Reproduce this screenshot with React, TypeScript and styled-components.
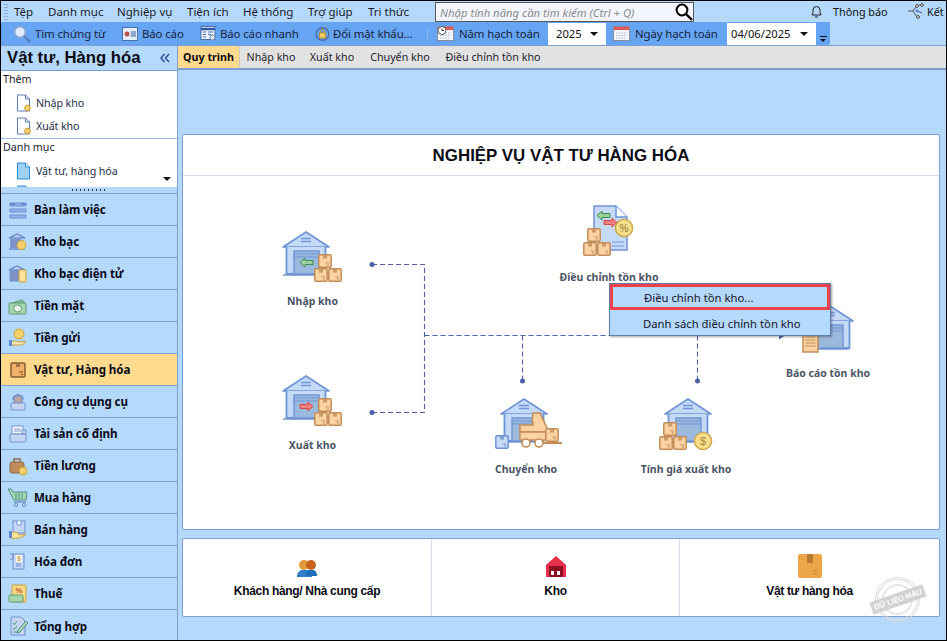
import React from "react";
import styled, { createGlobalStyle } from "styled-components";

const Global = createGlobalStyle`
  html, body { margin: 0; padding: 0; background: #000; }
  * { box-sizing: border-box; }
`;
const BLUE = "#b5d9fb";
const FONT = `"Noto Sans", "Open Sans", sans-serif`;

const Root = styled.div`
  width: 947px; height: 641px; border: 1px solid #000; background: ${BLUE};
  display: flex; flex-direction: column; overflow: hidden;
  font-family: ${FONT}; font-size: 12px; color: #111;
`;
const MenuBar = styled.div`height: 21px; flex: none; display: flex; align-items: center; position: relative; padding-left: 13px;`;
const MenuItem = styled.span<{ $w: number }>`width: ${p => p.$w}px; font-size: 11.5px; color: #1a1a2a; white-space: nowrap;`;
const Grip = styled.span`position: absolute; left: 3px; top: 3px; bottom: 2px; width: 4px;
  background: repeating-linear-gradient(#8fb0d6 0 1px, transparent 1px 3px);`;
const SearchBox = styled.div`width: 259px; height: 20px; margin: 1px 0 0 5px; border: 1px solid #555; background: #f3f6fe;
  display: flex; align-items: center; justify-content: space-between; padding: 0 0 0 4px;
  font-style: italic; color: #8a8a8a; font-size: 11.3px; position: relative; z-index: 2;`;
const RightGroup = styled.div`display: flex; align-items: center; margin-left: auto; font-size: 10.8px;`;
const RightItem = styled.span<{ $w: number }>`display: flex; align-items: center; width: ${p => p.$w}px; gap: 5px; white-space: nowrap;`;

const ToolRow = styled.div`height: 24px; flex: none; display: flex; border-bottom: 1px solid #7da0d0;`;
const Toolbar = styled.div`width: 829px; height: 23px; background: #66a4f4; display: flex; align-items: center; position: relative; padding-left: 12px; border-radius: 0 0 2px 0; color: #16243c; font-size: 11.4px; letter-spacing: -0.1px;`;
const Tool = styled.span<{ $w: number }>`display: flex; align-items: center; gap: 3px; width: ${p => p.$w}px; white-space: nowrap;`;
const Sep = styled.span`width: 1px; height: 13px; background: #8bb4ea; margin: 0 9px 0 0;`;
const Select = styled.div<{ $w: number }>`width: ${p => p.$w}px; height: 22px; background: #fff; display: flex; align-items: center; justify-content: space-between; padding: 0 8px 0 ${p => p.$w > 70 ? 4 : 8}px; color: #111; letter-spacing: 0; font-size: 11.2px;`;
const Caret = styled.i`display: block; width: 0; height: 0; border: 4.5px solid transparent; border-top: 4.5px solid #111; border-bottom: 0;`;
const Overflow = styled.div`position: absolute; right: 3px; bottom: 3px; width: 7px; height: 6px; border-top: 1px solid #111;
  &::after { content: ""; display: block; width: 0; height: 0; margin-top: 2px; border: 3.5px solid transparent; border-top: 3px solid #111; border-bottom: 0; }`;

const Body = styled.div`flex: 1; display: flex; min-height: 0;`;
const Side = styled.aside`width: 177px; flex: none; border-right: 1px solid #7da0d0; display: flex; flex-direction: column;`;
const SideHead = styled.div`height: 25px; flex: none; display: flex; align-items: center; justify-content: space-between; padding: 0 7px 0 6px;
  font-weight: 700; font-size: 16.7px; font-family: "Liberation Sans", sans-serif; color: #0b0b14; border-bottom: 1px solid #7da0d0;`;
const Section = styled.div<{ $h: number; $last?: boolean }>`height: ${p => p.$h}px; flex: none; background: #fff; border-bottom: ${p => p.$last ? "0" : "1px solid #9dbbe4"}; overflow: hidden; padding-left: 2px; position: relative;`;
const SectionTitle = styled.div`height: 20px; line-height: 17px; font-size: 10.7px; color: #1c1c2c;`;
const SectionRow = styled.div`height: 23px; display: flex; align-items: center; gap: 4px; padding-left: 13px; font-size: 10.7px; letter-spacing: -0.1px; color: #26304a;`;
const DownMark = styled.i`position: absolute; right: 6px; bottom: 6px; width: 0; height: 0; border: 4px solid transparent; border-top: 4px solid #111; border-bottom: 0;`;
const SideGrip = styled.div`height: 7px; flex: none; display: flex; justify-content: center; align-items: center; border-bottom: 1px solid #7da0d0; padding-bottom:1px; background: ${BLUE};
  &::after { content: ""; width: 34px; height: 2px; background: repeating-linear-gradient(90deg, #333 0 1px, transparent 1px 4px); }`;
const NavRow = styled.div<{ $active?: boolean }>`height: 32px; flex: none; display: flex; align-items: center; gap: 6px; padding-left: 7px; border-bottom: 1px solid #7da0d0;
  background: ${p => p.$active ? "#fdda8e" : "transparent"}; font-weight: 700; font-size: 11.6px; color: #0a0a18; letter-spacing: -0.1px;
  &:last-child { border-bottom: 0; }`;

const Main = styled.main`flex: 1; min-width: 0; display: flex; flex-direction: column;`;
const Tabs = styled.div`height: 24px; background: #e2e2e2; border-bottom: 2px solid #7da0d0; display: flex; flex: none;`;
const Tab = styled.div<{ $active?: boolean; $w: number }>`width: ${p => p.$w}px; height: 22px; display: flex; align-items: center; justify-content: center; font-size: 10.7px; color: #1c1c2c;
  ${p => p.$active ? `background: #fdda8e; font-weight: 700; color: #0b0b14; border-right: 1px solid #c9c9c9;` : ""}`;
const Content = styled.div`flex: 1; display: flex; flex-direction: column; padding: 64px 6px 23px 4px; gap: 8px; min-height: 0;`;
const Card = styled.section`height: 396px; background: #fff; border: 1px solid #7da0d0; border-radius: 2px; display: flex; flex-direction: column; flex: none;`;
const CardTitle = styled.h1`margin: 0; height: 41px; border-bottom: 1px solid #d3dde9; flex: none; display: flex; align-items: center; justify-content: center;
  font-family: "Liberation Sans", sans-serif; font-size: 16.9px; font-weight: 700; color: #0b0b14; padding-top: 1px;`;
const Canvas = styled.div`position: relative; flex: 1;`;
const Wires = styled.svg`position: absolute; left: 0; top: 0;`;
const Node = styled.div<{ $x: number; $y: number }>`position: absolute; left: ${p => p.$x}px; top: ${p => p.$y}px; width: 150px; margin-left: -75px;
  display: flex; flex-direction: column; align-items: center;`;
const NodeLabel = styled.div<{ $top: number; $dx?: number }>`margin-top: ${p => p.$top}px; margin-left: ${p => p.$dx ?? 0}px; font-weight: 700; font-size: 10.5px; color: #4b5568; white-space: nowrap;`;
const Popup = styled.div`position: absolute; left: 426px; top: 107px; width: 222px; height: 53px; background: ${BLUE}; border: 1px solid #5e7fa8; box-shadow: 1px 1px 2px rgba(60,60,60,.45); z-index: 3;`;
const PopItem = styled.div<{ $hot?: boolean }>`height: 26px; display: flex; align-items: center; padding-left: ${p => p.$hot ? 31 : 33}px; font-size: 11.3px; color: #16162a;
  ${p => p.$hot ? `border: 3px solid #ef4050; ` : ""}`;

const Bottom = styled.section`height: 79px; background: #fff; border: 1px solid #7da0d0; border-radius: 2px; display: grid; grid-template-columns: 248px 248px 1fr; position: relative; flex: none;`;
const Shortcut = styled.div`display: flex; flex-direction: column; align-items: center; justify-content: flex-end; padding-bottom: 18px; gap: 6px;
  font-family: "Liberation Sans", sans-serif; font-weight: 700; font-size: 12px; color: #0a0a14; letter-spacing: -0.32px;
  & + & { border-left: 1px solid #d3dde9; }`;
const Stamp = styled.div`position: absolute; right: 19px; top: 38px; width: 45px; height: 45px; border-radius: 50%; border: 3px double #d9d9d9; outline: 2px solid #e6e6e6; outline-offset: -9px; display: flex; align-items: center; justify-content: center;`;
const StampLabel = styled.span`background: #d2d2d2; color: #fff; font-family: "Liberation Sans", sans-serif; font-weight: 700; font-size: 7.5px; white-space: nowrap; padding: 2px 3px; transform: rotate(-19deg);`;

const S = "#6f94d6"; const F = "#c5daf7"; const BS = "#c48d58"; const BF = "#fbd3a2";

function Box({ x, y, s = 14, blue }: { x: number; y: number; s?: number; blue?: boolean }) {
  const st = blue ? "#6f94d6" : BS, fi = blue ? "#c5daf7" : BF;
  return <g transform={`translate(${x} ${y}) scale(${s / 14})`}>
    <rect x=".8" y=".8" width="12.4" height="12.4" rx="1.2" fill={fi} stroke={st} strokeWidth="1.5" />
    <rect x="5" y="1" width="4" height="3.6" fill={st} opacity=".8" />
    <path d="M7.5 9h3.5M9 11h2" stroke={st} strokeWidth="1" />
  </g>;
}
function House({ door = "#9ab9dc" }: { door?: string }) {
  return <g>
    <path d="M1 17 L24 2 L47 17 Z" fill={F} stroke={S} strokeWidth="1.6" strokeLinejoin="round" />
    <path d="M19 8.500h10M19 11.500h10" stroke={S} strokeWidth="1.4" />
    <path d="M4.500 17v27h39V17" fill={F} stroke={S} strokeWidth="1.8" />
    <rect x="12" y="21" width="25" height="23" fill={door} stroke={S} strokeWidth="1.4" />
    <path d="M12 24h25M12 27h25" stroke={S} strokeWidth="1" />
    <path d="M1 45h42" stroke={S} strokeWidth="1.6" />
  </g>;
}
function Stack({ x, y }: { x: number; y: number }) {
  return <g><Box x={x + 4} y={y} /><Box x={x} y={y + 14} /><Box x={x + 14} y={y + 14} /></g>;
}
function Arrow({ x, y, color, dir }: { x: number; y: number; color: string; dir: "l" | "r" }) {
  const d = dir === "l" ? "M0 4.500 L5 0v2.500h8v4H5V9Z" : "M13 4.500 L8 0v2.500H0v4h8V9Z";
  return <path transform={`translate(${x} ${y})`} d={d} fill={color === "g" ? "#9ed09f" : "#ef8080"} stroke={color === "g" ? "#3b8a4e" : "#d44"} strokeWidth="1" />;
}
const Ico = styled.svg`display: block; flex: none;`;

const WhImport = () => <Ico width="62" height="54" viewBox="0 0 62 54"><House /><Arrow x={18} y={28} color="g" dir="l" /><Stack x={32} y={24} /></Ico>;
const WhExport = () => <Ico width="62" height="54" viewBox="0 0 62 54"><House /><Arrow x={18} y={28} color="r" dir="r" /><Stack x={32} y={24} /></Ico>;
const WhMove = () => <Ico width="68" height="54" viewBox="0 0 68 54"><g transform="translate(5 0)"><House /></g>
  <Box x={0} y={38} s={14} blue />
  <path d="M27 28h11v-3h-1l1-9h7l7 15v4H25v-7z" fill={BF} stroke={BS} strokeWidth="1.6" />
  <path d="M25 35h26v8H25z" fill={BF} stroke={BS} strokeWidth="1.4" />
  <circle cx="31" cy="46" r="4" fill="#fff" stroke={BS} strokeWidth="1.6" /><circle cx="44" cy="46" r="4" fill="#fff" stroke={BS} strokeWidth="1.6" />
  <Box x={50} y={31} /><path d="M48 46h19" stroke={BS} strokeWidth="2" />
</Ico>;
const WhPrice = () => <Ico width="56" height="54" viewBox="0 0 56 54"><g transform="translate(5 0)"><House /></g>
  <Stack x={0} y={25} />
  <circle cx="44" cy="44" r="8.600" fill="#f8dd8a" stroke="#c9a84c" strokeWidth="1.4" />
  <text x="44" y="48" fontSize="11" fill="#a58432" textAnchor="middle" fontFamily="Liberation Sans">$</text>
</Ico>;
const DocAdjust = () => <Ico width="52" height="54" viewBox="0 0 52 54">
  <path d="M11 1h22l11 11v33H11z" fill={F} stroke={S} strokeWidth="1.5" /><path d="M33 1v11h11" fill="#fff" stroke={S} strokeWidth="1.5" />
  <Arrow x={14} y={6} color="g" dir="l" /><Arrow x={21} y={13} color="r" dir="r" />
  <path d="M29 37h12M29 41h12" stroke={S} strokeWidth="1" />
  <circle cx="41" cy="23" r="8.600" fill="#f8dd8a" stroke="#c9a84c" strokeWidth="1.4" />
  <text x="41" y="27" fontSize="10" fill="#8f7a3a" textAnchor="middle" fontFamily="Liberation Sans">%</text>
  <Stack x={0} y={23} />
</Ico>;
const WhReport = () => <Ico width="52" height="54" viewBox="0 0 52 54"><g transform="translate(4 2)"><House /></g>
  <path d="M1 26h11l4 4v20H1z" fill={BF} stroke={BS} strokeWidth="1.5" /><path d="M3.500 35h10M3.500 38h10M3.500 41h10M3.500 44h10" stroke={BS} strokeWidth="1" />
</Ico>;

const Page = ({ color }: { color?: string }) => <Ico width="16" height="18" viewBox="0 0 16 18">
  <path d="M1.500 1h8l4 4v12h-12z" fill={color || "#fff"} stroke={color ? "#2f8fd8" : "#5c7bb8"} strokeWidth="1" />
  {!color && <path d="M9.500 1v4h4" fill="none" stroke="#5c7bb8" />}
  {!color && <circle cx="11.500" cy="14" r="2.800" fill="#f6d36b" stroke="#c79a2c" />}
  {color && <path d="M9.500 1v4h4" fill="#dbeafe" stroke="#2f8fd8" />}
</Ico>;

const N = (p: { children: React.ReactNode }) => <Ico width="20" height="20" viewBox="0 0 20 20">{p.children}</Ico>;
const bl = "#6f8fcf", lb = "#c5d6f4", ye = "#f6d06a", ys = "#c9a23a", og = "#eeb06a";
const navIcons: React.ReactNode[] = [
  <N><path d="M2 3h16v3H2zM2 9h16v3H2zM2 15h16v3H2z" fill="#8fb4ee" stroke={bl} /><path d="M2 4h5M13 4h5" stroke="#3d66b7"/></N>,
  <N><path d="M1 6l8-4 8 4zM3 7v9M7 7v9M11 7v9M1 17h16" fill={lb} stroke={bl} strokeWidth="1.5" /><rect x="3" y="7" width="10" height="9" fill="#7f92c8" /><circle cx="13.500" cy="13" r="4.500" fill={ye} stroke={ys} /></N>,
  <N><path d="M1 6l8-4 8 4z" fill={lb} stroke={bl} strokeWidth="1.5" /><rect x="2" y="7" width="11" height="10" fill="#7f92c8" stroke={bl} /><rect x="11" y="6" width="7" height="12" rx="1" fill="#fbe39a" stroke={ys} /></N>,
  <N><path d="M1 8l13-4 3 3z" fill="#8cc79a" stroke="#5d9c6e"/><rect x="1" y="7" width="17" height="11" rx="1" fill="#a5d6ae" stroke="#5d9c6e" /><ellipse cx="9.500" cy="12.500" rx="4" ry="3.500" fill="#e8f6ea" stroke="#5d9c6e" /></N>,
  <N><circle cx="11" cy="6" r="5" fill={ye} stroke={ys} /><path d="M3 14c4-2 6 0 9 0l6-1c-1 2-3 4-7 4H3z" fill="#fbe6b5" stroke={ys} /><rect x="1" y="12" width="3" height="6" fill="#5b87d6" /></N>,
  <N><rect x="3" y="3" width="14" height="14" rx="1.500" fill={og} stroke="#8a5a30" strokeWidth="1.5" /><path d="M8 3h4v4H8z" fill="#a5703f" /><path d="M11 12h4M13 14.500h2" stroke="#7a4a20" /></N>,
  <N><path d="M5 8V5l5-3 5 3v3" fill="#8d9bc9" stroke={bl} /><rect x="6" y="4" width="8" height="9" fill="#b9a3a3" stroke={bl} /><rect x="3" y="11" width="14" height="7" rx="1" fill={lb} stroke={bl} /></N>,
  <N><rect x="4" y="2" width="11" height="8" fill="#fff" stroke={bl} /><path d="M6 5h7M6 7h7" stroke={bl}/><rect x="2" y="10" width="16" height="8" rx="1" fill={lb} stroke={bl} /><path d="M14 6h4v4h-4z" fill={lb} stroke={bl} /></N>,
  <N><rect x="2" y="6" width="14" height="11" rx="2" fill="#c08a5c" stroke="#8a6848" /><path d="M6 6V3h6v3" fill="none" stroke="#8a6848" strokeWidth="1.4" /><circle cx="15" cy="15" r="4" fill={ye} stroke={ys} /></N>,
  <N><path d="M0 1h3l2 3h14l-1 8H6z" fill="#a5d6ae" stroke="#4d8f88" /><path d="M8 5v6M11 5v6M14 5v6" stroke="#4d8f88" /><path d="M6 14h12" stroke={bl} strokeWidth="1.4" /><circle cx="8" cy="17" r="1.600" fill={lb} stroke={bl} /><circle cx="16" cy="17" r="1.600" fill={lb} stroke={bl} /></N>,
  <N><rect x="5" y="1" width="12" height="12" fill={lb} stroke={bl} /><path d="M9 1v4h4V1" fill="#fff" stroke={bl} /><path d="M2 12v6h2c2 1 8 1 14-4-3 0-5 1-7 1 0-2-3-3-7-3z" fill="#fbe39a" stroke={ys} /><rect x="1" y="11" width="3" height="7" fill="#5b87d6" /></N>,
  <N><path d="M2 2h3v5H2M5 2h11v15H5z" fill={lb} stroke={bl} /><rect x="8" y="3" width="6" height="7" fill="#fff" /><text x="11" y="9" fontSize="7" fill={ys} textAnchor="middle" fontFamily="Liberation Sans">$</text><path d="M8 12h5M8 14h5" stroke={bl} /></N>,
  <N><rect x="4" y="1" width="14" height="17" rx="1" fill="#f8d984" stroke={ys} /><text x="11" y="9" fontSize="8" fontWeight="700" fill="#c6503a" textAnchor="middle" fontFamily="Liberation Sans">%</text><rect x="1" y="11" width="14" height="7" rx="1" fill="#a5d6ae" stroke="#5d9c6e" /></N>,
  <N><path d="M3 1h10l4 4v14H3z" fill={lb} stroke={bl} /><path d="M5 7l1.500 1.500L9 5M5 12l1.500 1.500L9 10M5 16h6" stroke="#4d9a66" fill="none" /><path d="M10 14l8-9 2 2-8 9-3 1z" fill="#a5d6ae" stroke="#4d8f88" /></N>,
];
const nav = ["Bàn làm việc", "Kho bạc", "Kho bạc điện tử", "Tiền mặt", "Tiền gửi", "Vật tư, Hàng hóa", "Công cụ dụng cụ", "Tài sản cố định", "Tiền lương", "Mua hàng", "Bán hàng", "Hóa đơn", "Thuế", "Tổng hợp"];

const Magnifier = ({ size = 18, dark }: { size?: number; dark?: boolean }) => <Ico width={size} height={size} viewBox="0 0 18 18">
  <circle cx="7" cy="7" r="5.400" fill={dark ? "#fff" : "#dcecff"} stroke={dark ? "#000" : "#8fa8cc"} strokeWidth={dark ? 2 : 1.6} />
  <path d="M11 11l6 6" stroke={dark ? "#000" : "#5c7fb8"} strokeWidth="2.4" />
</Ico>;
const ReportIco = () => <Ico width="16" height="16" viewBox="0 0 16 16"><rect x=".5" y="1.500" width="15" height="13" fill="#e6effc" stroke="#4c6fa8" /><circle cx="5" cy="8" r="2.500" fill="#c0504d" /><path d="M9 6h5M9 8h5M9 10h5" stroke="#3d5f9c" /></Ico>;
const QuickIco = () => <Ico width="17" height="17" viewBox="0 0 17 17"><rect x="1" y="1.500" width="14" height="13" fill="#eef4fd" stroke="#4c6fa8" /><path d="M1 4h14" stroke="#2f5aa8" strokeWidth="2.5" /><path d="M3 7h3M8 7h5M3 9.500h3M8 9.500h3M3 12h3" stroke="#4c6fa8" /><circle cx="12.500" cy="12.500" r="2.600" fill="#dcecff" stroke="#6c7f9c" /></Ico>;
const LockIco = () => <Ico width="15" height="17" viewBox="0 0 15 17"><circle cx="7.500" cy="9" r="6.300" fill="none" stroke="#4a6ba8" strokeWidth="1.4" /><rect x="4.500" y="8" width="6" height="5" fill="#f4cc5e" stroke="#b5902c" /><path d="M5.500 8V6.200a2 2 0 014 0V8" fill="none" stroke="#b5902c" /></Ico>;
const CalIco = ({ clock }: { clock?: boolean }) => <Ico width="17" height="15" viewBox="0 0 17 15"><rect x=".5" y=".5" width="16" height="14" fill="#f4f7fc" stroke="#8a8a9c" /><rect x="1" y="1" width="15" height="3" fill="#e0585a" /><path d="M3 7h11M3 9.500h11M3 12h11" stroke="#b0bdd0" strokeDasharray="1.5 1.2" />{clock && <><circle cx="5" cy="4.500" r="4" fill="#fff" stroke="#555" /><path d="M5 2.500v2h2" stroke="#333" fill="none" /></>}</Ico>;

export default function App() {
  return <Root>
    <Global />
    <MenuBar>
      <Grip />
      {([["Tệp", 34], ["Danh mục", 69], ["Nghiệp vụ", 70], ["Tiện ích", 56], ["Hệ thống", 65], ["Trợ giúp", 60], ["Tri thức", 62]] as [string, number][]).map(([t, w]) => <MenuItem key={t} $w={w}>{t}</MenuItem>)}
      <SearchBox>Nhập tính năng cần tìm kiếm (Ctrl + Q)<Magnifier size={18} dark /></SearchBox>
      <RightGroup>
        <RightItem $w={97}>
          <Ico width="13" height="14" viewBox="0 0 13 14"><path d="M2 10c1-1 1-3 1-5a3.500 3.500 0 017 0c0 2 0 4 1 5zM5 12h3" fill="none" stroke="#222" /></Ico>
          <span style={{ marginLeft: 5 }}>Thông báo</span>
        </RightItem>
        <RightItem $w={39}>
          <Ico width="19" height="17" viewBox="0 0 19 17"><path d="M1 8h5l4-5M6 8l4 6M10 3l5-2M10 8l5 2" fill="none" stroke="#555" /><circle cx="10" cy="8" r="1.400" fill="#5b87d6" /><circle cx="10" cy="3" r="1.400" fill="#fff" stroke="#444" /><circle cx="15" cy="2" r="1.400" fill="#fff" stroke="#444" /><circle cx="11" cy="14" r="1.400" fill="#fff" stroke="#444" /></Ico>
          <span style={{ marginLeft: -4 }}>Kết</span>
        </RightItem>
      </RightGroup>
    </MenuBar>

    <ToolRow>
      <Toolbar>
        <Tool $w={109}><Magnifier size={18} /><span style={{ marginLeft: 1 }}>Tìm chứng từ</span></Tool>
        <Tool $w={78}><ReportIco /><span style={{ marginLeft: 1 }}>Báo cáo</span></Tool>
        <Tool $w={115}><QuickIco /><span>Báo cáo nhanh</span></Tool>
        <Tool $w={112}><LockIco /><span>Đổi mật khẩu...</span></Tool>
        <Sep />
        <Tool $w={111}><CalIco clock /><span style={{ marginLeft: 2 }}>Năm hạch toán</span></Tool>
        <Select $w={58}>2025<Caret /></Select>
        <Tool $w={121} style={{ paddingLeft: 7 }}><CalIco /><span style={{ marginLeft: 2 }}>Ngày hạch toán</span></Tool>
        <Select $w={89}>04/06/2025<Caret /></Select>
        <Overflow />
      </Toolbar>
    </ToolRow>

    <Body>
      <Side>
        <SideHead>Vật tư, Hàng hóa
          <Ico width="10" height="10" viewBox="0 0 10 10"><path d="M4.500 1L1 5l3.500 4M9 1L5.500 5 9 9" fill="none" stroke="#2c4d96" strokeWidth="1.400" /></Ico>
        </SideHead>
        <Section $h={68}>
          <SectionTitle>Thêm</SectionTitle>
          <SectionRow><Page />Nhập kho</SectionRow>
          <SectionRow><Page />Xuất kho</SectionRow>
        </Section>
        <Section $h={48} $last>
          <SectionTitle>Danh mục</SectionTitle>
          <SectionRow><Page color="#9fd0f5" />Vật tư, hàng hóa</SectionRow>
          <SectionRow><Page color="#9fd0f5" /></SectionRow>
          <DownMark />
        </Section>
        <SideGrip />
        {nav.map((t, i) => <NavRow key={t} $active={i === 5}>{navIcons[i]}{t}</NavRow>)}
      </Side>

      <Main>
        <Tabs>
          <Tab $active $w={62}>Quy trình</Tab>
          <Tab $w={62}>Nhập kho</Tab>
          <Tab $w={60}>Xuất kho</Tab>
          <Tab $w={76}>Chuyển kho</Tab>
          <Tab $w={110}>Điều chỉnh tồn kho</Tab>
        </Tabs>
        <Content>
          <Card>
            <CardTitle>NGHIỆP VỤ VẬT TƯ HÀNG HÓA</CardTitle>
            <Canvas>
              <Wires width="756" height="354" viewBox="0 0 756 354">
                <g fill="none" stroke="#4a5fa5" strokeWidth="1.100" strokeDasharray="5 3">
                  <path d="M189 88.500H241.500V236.500H189" />
                  <path d="M241.500 159.500H600" />
                  <path d="M339.500 159.500V205" />
                  <path d="M514.500 159.500V205" />
                </g>
                <g fill="#4a5fa5">
                  <circle cx="189" cy="88.500" r="2.500" /><circle cx="189" cy="236.500" r="2.500" />
                  <circle cx="339.500" cy="205" r="2.500" /><circle cx="514.500" cy="205" r="2.500" />
                  <path d="M596 155.500l6 4-6 4z" />
                </g>
              </Wires>
              <Node $x={130} $y={54}><WhImport /><NodeLabel $top={10} $dx={-1}>Nhập kho</NodeLabel></Node>
              <Node $x={130} $y={198}><WhExport /><NodeLabel $top={10} $dx={-1}>Xuất kho</NodeLabel></Node>
              <Node $x={346} $y={221}><WhMove /><NodeLabel $top={11} $dx={-6}>Chuyển kho</NodeLabel></Node>
              <Node $x={504} $y={221}><WhPrice /><NodeLabel $top={11} $dx={-2}>Tính giá xuất kho</NodeLabel></Node>
              <Node $x={426} $y={29}><DocAdjust /><NodeLabel $top={11}>Điều chỉnh tồn kho</NodeLabel></Node>
              <Node $x={645} $y={126}><WhReport /><NodeLabel $top={10}>Báo cáo tồn kho</NodeLabel></Node>
              <Popup>
                <PopItem $hot>Điều chỉnh tồn kho...</PopItem>
                <PopItem>Danh sách điều chỉnh tồn kho</PopItem>
              </Popup>
            </Canvas>
          </Card>
          <Bottom>
            <Shortcut>
              <Ico width="22" height="20" viewBox="0 0 22 20"><path d="M1 19c0-5 3-7 5-7h5c3 0 5 2 5 7z" fill="#2f7ec9" /><path d="M10 18c0-5 2-6 4-6h3c2 0 4 2 4 6z" fill="#1f6fb8" /><circle cx="8" cy="7" r="5" fill="#e39a3c" /><circle cx="15" cy="7" r="5" fill="#c8641c" /></Ico>
              Khách hàng/ Nhà cung cấp
            </Shortcut>
            <Shortcut>
              <Ico width="22" height="23" viewBox="0 0 22 23"><path d="M11 1l10 9v12H1V10z" fill="#e8304e" /><rect x="4" y="11" width="14" height="11" fill="#8c0f22" /><rect x="6" y="16" width="3" height="4" fill="#fff" /><rect x="12" y="16" width="3" height="4" fill="#fff" /></Ico>
              Kho
            </Shortcut>
            <Shortcut>
              <Ico width="24" height="24" viewBox="0 0 24 24"><rect width="24" height="24" rx="2" fill="#eba648" /><rect x="9" width="6" height="9" fill="#b97a30" /><path d="M15 17h4M16 20h3" stroke="#b97a30" /></Ico>
              Vật tư hàng hóa
            </Shortcut>
            <Stamp><StampLabel>DỮ LIỆU MẪU</StampLabel></Stamp>
          </Bottom>
        </Content>
      </Main>
    </Body>
  </Root>;
}
